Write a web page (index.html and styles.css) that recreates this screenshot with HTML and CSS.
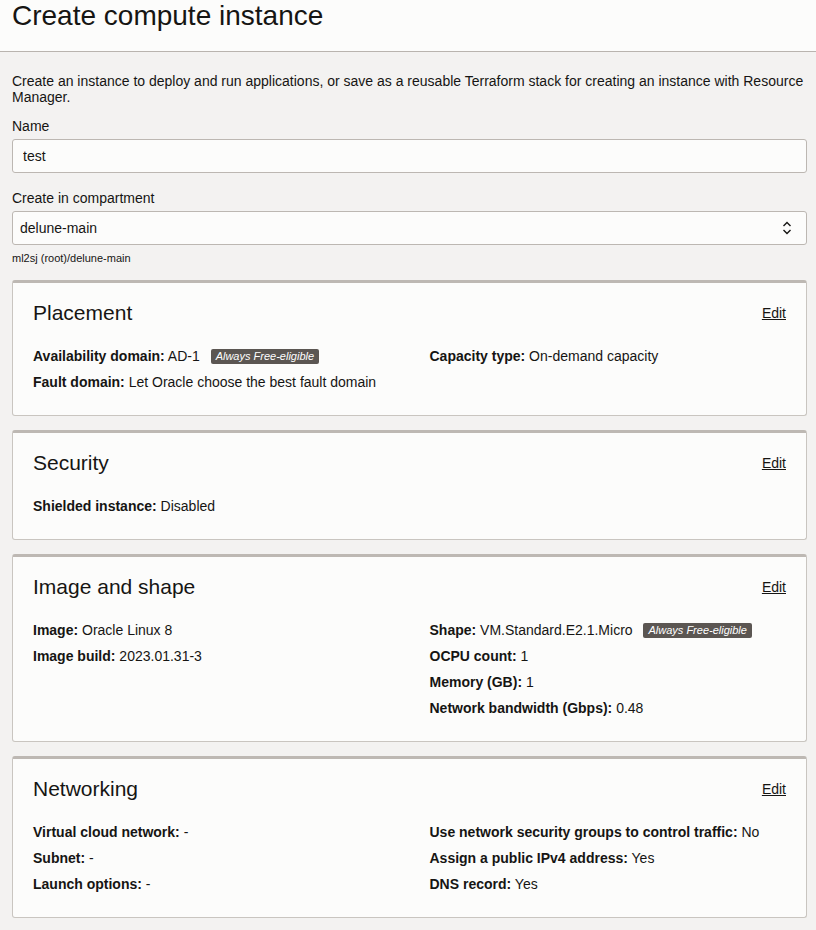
FILE: index.html
```html
<!DOCTYPE html>
<html lang="en">

<head>
    <meta charset="UTF-8">
    <meta name="viewport" content="width=device-width, initial-scale=1.0">
    <title>Create compute instance</title>
    <link rel="stylesheet" href="styles.css">
</head>

<body>
    <div class="header">
        <h1>Create compute instance</h1>
    </div>

    <div class="content">
        <p class="intro">Create an instance to deploy and run applications, or save as a reusable Terraform stack for creating an instance with Resource Manager.</p>

        <div class="field">
            <label for="name">Name</label>
            <input type="text" id="name" class="textInput" value="test">
        </div>

        <div class="field">
            <label for="compartment">Create in compartment</label>
            <div class="select" id="compartment">
                <span>delune-main</span>
                <svg width="10" height="16" viewBox="0 0 10 16">
                    <path d="M1.5 6 L5 2.5 L8.5 6" fill="none" stroke="#161513" stroke-width="1.4" />
                    <path d="M1.5 10 L5 13.5 L8.5 10" fill="none" stroke="#161513" stroke-width="1.4" />
                </svg>
            </div>
            <p class="helper">ml2sj (root)/delune-main</p>
        </div>

        <div class="card">
            <div class="cardHead">
                <h2>Placement</h2>
                <a href="#">Edit</a>
            </div>
            <div class="cols">
                <div>
                    <p><b>Availability domain:</b> AD-1 <span class="badge">Always Free-eligible</span></p>
                    <p><b>Fault domain:</b> Let Oracle choose the best fault domain</p>
                </div>
                <div>
                    <p><b>Capacity type:</b> On-demand capacity</p>
                </div>
            </div>
        </div>

        <div class="card">
            <div class="cardHead">
                <h2>Security</h2>
                <a href="#">Edit</a>
            </div>
            <div class="cols">
                <div>
                    <p><b>Shielded instance:</b> Disabled</p>
                </div>
            </div>
        </div>

        <div class="card">
            <div class="cardHead">
                <h2>Image and shape</h2>
                <a href="#">Edit</a>
            </div>
            <div class="cols">
                <div>
                    <p><b>Image:</b> Oracle Linux 8</p>
                    <p><b>Image build:</b> 2023.01.31-3</p>
                </div>
                <div>
                    <p><b>Shape:</b> VM.Standard.E2.1.Micro <span class="badge">Always Free-eligible</span></p>
                    <p><b>OCPU count:</b> 1</p>
                    <p><b>Memory (GB):</b> 1</p>
                    <p><b>Network bandwidth (Gbps):</b> 0.48</p>
                </div>
            </div>
        </div>

        <div class="card">
            <div class="cardHead">
                <h2>Networking</h2>
                <a href="#">Edit</a>
            </div>
            <div class="cols">
                <div>
                    <p><b>Virtual cloud network:</b> -</p>
                    <p><b>Subnet:</b> -</p>
                    <p><b>Launch options:</b> -</p>
                </div>
                <div>
                    <p><b>Use network security groups to control traffic:</b> No</p>
                    <p><b>Assign a public IPv4 address:</b> Yes</p>
                    <p><b>DNS record:</b> Yes</p>
                </div>
            </div>
        </div>
    </div>
</body>

</html>
```

FILE: styles.css
```css
* {
    margin: 0;
    padding: 0;
    box-sizing: border-box;
    font-family: "Liberation Sans", Arial, sans-serif;
}

body {
    background: #f3f2f1;
    color: #161513;
}

.header {
    background: #fcfcfb;
    padding: 0 12px 19px;
    border-bottom: 1px solid #b9b4af;
}

h1 {
    font-size: 28px;
    font-weight: normal;
    line-height: 32px;
}

.content {
    padding: 21px 9px 12px 12px;
}

.intro {
    font-size: 14px;
    line-height: 16px;
    margin-bottom: 13px;
}

.field label {
    display: block;
    font-size: 14px;
    line-height: 16px;
    margin-bottom: 5px;
}

.textInput {
    display: block;
    width: 100%;
    height: 34px;
    padding: 0 10px;
    font-size: 14px;
    color: #161513;
    background: #fcfcfb;
    border: 1px solid #bcb7b2;
    border-radius: 3px;
    margin-bottom: 17px;
}

.select {
    display: flex;
    justify-content: space-between;
    align-items: center;
    height: 34px;
    padding: 0 14px 0 7px;
    font-size: 14px;
    background: #fcfcfb;
    border: 1px solid #bcb7b2;
    border-radius: 3px;
}

.helper {
    font-size: 11px;
    line-height: 14px;
    margin-top: 6px;
    margin-bottom: 15px;
}

.card {
    background: #fcfcfb;
    border: 1px solid #c9c5c0;
    border-top: 3px solid #bdb8b3;
    border-radius: 3px;
    padding: 18px 20px 20px;
    margin-bottom: 14px;
}

.cardHead {
    display: flex;
    justify-content: space-between;
    align-items: center;
    margin-bottom: 18px;
}

.cardHead h2 {
    font-size: 21px;
    font-weight: normal;
    line-height: 24px;
}

.cardHead a {
    font-size: 14px;
    color: #161513;
    text-decoration: underline;
}

.cols {
    display: grid;
    grid-template-columns: 1fr 1fr;
    column-gap: 40px;
}

.cols p {
    font-size: 14px;
    line-height: 26px;
}

.badge {
    display: inline-block;
    background: #5b5652;
    color: #fff;
    font-size: 11px;
    font-style: italic;
    line-height: 15px;
    padding: 0 5px;
    border-radius: 2px;
    margin-left: 7px;
    vertical-align: 1px;
}
```
